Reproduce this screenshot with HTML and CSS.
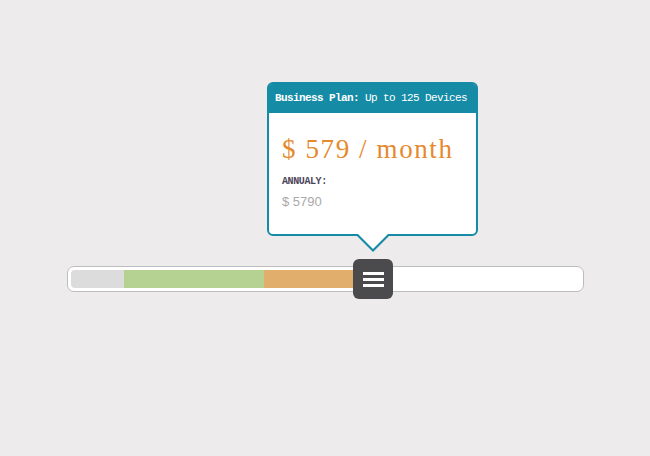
FILE: index.html
```html
<!DOCTYPE html>
<html lang="en">
<head>
    <meta charset="UTF-8">
    <meta name="viewport" content="width=device-width, initial-scale=1.0">
    <title>Pricing Slider</title>
    <link rel="stylesheet" href="styles.css">
</head>
<body>
    <div class="page">
        <!-- Csúszka -->
        <div class="slider">
            <div class="track">
                <div class="seg seg-gray"></div>
                <div class="seg seg-green"></div>
                <div class="seg seg-orange"></div>
            </div>

            <!-- Fogantyú -->
            <div class="handle" aria-label="Drag">
                <span></span>
                <span></span>
                <span></span>
            </div>

            <!-- Tooltip az árral -->
            <div class="plan-tip">
                <div class="plan-head"><b>Business Plan:</b> Up to 125 Devices</div>
                <div class="plan-body">
                    <div class="price">$ 579 / month</div>
                    <div class="annual-label">ANNUALY:</div>
                    <div class="annual-price">$ 5790</div>
                </div>
                <div class="arrow"></div>
            </div>
        </div>
    </div>
</body>
</html>
```

FILE: styles.css
```css
body {
    margin: 0;
    background-color: #edebeb;
    font-family: "Liberation Sans", Arial, sans-serif;
    height: 100vh;
    overflow: hidden;
}
.page {
    padding: 266px 0 0 67px;
}
.slider {
    position: relative;
    width: 509px;
    height: 18px;
    padding: 3px;
    background-color: #fff;
    border: 1px solid #bdbdbd;
    border-radius: 7px;
}
.track {
    display: flex;
    height: 18px;
}
.seg {
    height: 100%;
}
.seg-gray {
    width: 53px;
    background-color: #dcdcdc;
    border-radius: 4px 0 0 4px;
}
.seg-green {
    width: 140px;
    background-color: #b5d292;
}
.seg-orange {
    width: 89px;
    background-color: #e1ae6c;
}
.handle {
    position: absolute;
    left: 285px;
    top: -8px;
    width: 40px;
    height: 40px;
    background-color: #4b4b4d;
    border-radius: 6px;
    display: flex;
    flex-direction: column;
    align-items: center;
    justify-content: center;
    gap: 3px;
    cursor: pointer;
}
.handle span {
    display: block;
    width: 21px;
    height: 3px;
    background-color: #fff;
}
.plan-tip {
    position: absolute;
    left: 199px;
    top: -185px;
    width: 207px;
    height: 150px;
    background-color: #fff;
    border: 2px solid #168ba6;
    border-radius: 6px;
}
.plan-head {
    height: 29px;
    line-height: 29px;
    padding-left: 6px;
    background-color: #168ba6;
    border-radius: 3px 3px 0 0;
    color: #fff;
    font-family: "Liberation Mono", "Courier New", monospace;
    font-size: 11px;
    letter-spacing: -0.6px;
    white-space: nowrap;
}
.plan-body {
    padding: 21px 13px 0;
}
.price {
    font-family: "Liberation Serif", "Times New Roman", serif;
    font-size: 27px;
    line-height: 30px;
    letter-spacing: 1.6px;
    color: #e6892e;
    white-space: nowrap;
}
.annual-label {
    margin-top: 12px;
    font-family: "Liberation Mono", "Courier New", monospace;
    font-size: 10px;
    font-weight: bold;
    letter-spacing: -0.4px;
    color: #4b4459;
}
.annual-price {
    margin-top: 7px;
    font-size: 13px;
    color: #a9a9a9;
}
.arrow {
    position: absolute;
    left: 50%;
    top: 100%;
    margin-left: -18px;
    width: 0;
    height: 0;
    border-left: 18px solid transparent;
    border-right: 18px solid transparent;
    border-top: 18px solid #168ba6;
}
.arrow::after {
    content: "";
    position: absolute;
    left: -18px;
    top: -21px;
    border-left: 18px solid transparent;
    border-right: 18px solid transparent;
    border-top: 18px solid #fff;
}
```
